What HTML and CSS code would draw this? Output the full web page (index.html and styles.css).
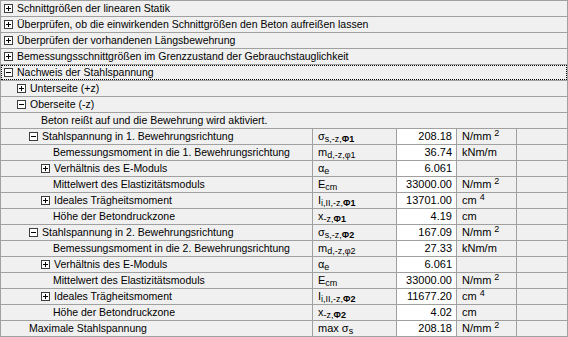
FILE: index.html
```html
<!DOCTYPE html>
<html lang="de">
<head>
<meta charset="utf-8">
<title>Nachweis der Stahlspannung</title>
<link rel="stylesheet" href="styles.css">
</head>
<body>
<div class="tree">
  <div class="row"><div class="name l0"><span class="tg plus"></span>Schnittgrößen der linearen Statik</div></div>
  <div class="row"><div class="name l0"><span class="tg plus"></span>Überprüfen, ob die einwirkenden Schnittgrößen den Beton aufreißen lassen</div></div>
  <div class="row"><div class="name l0"><span class="tg plus"></span>Überprüfen der vorhandenen Längsbewehrung</div></div>
  <div class="row"><div class="name l0"><span class="tg plus"></span>Bemessungsschnittgrößen im Grenzzustand der Gebrauchstauglichkeit</div></div>
  <div class="row"><div class="name l0 focus"><span class="tg minus"></span>Nachweis der Stahlspannung</div></div>
  <div class="row"><div class="name l1"><span class="tg plus"></span>Unterseite (+z)</div></div>
  <div class="row"><div class="name l1"><span class="tg minus"></span>Oberseite (-z)</div></div>
  <div class="row"><div class="name t2">Beton reißt auf und die Bewehrung wird aktiviert.</div></div>

  <div class="row cols">
    <div class="name l2"><span class="tg minus"></span>Stahlspannung in 1. Bewehrungsrichtung</div>
    <div class="sym">σ<span class="sub">s,-z,</span><span class="sub phi">Φ1</span></div>
    <div class="val">208.18</div>
    <div class="unit">N/mm<span class="sup">2</span></div>
    <div class="extra"></div>
  </div>
  <div class="row cols">
    <div class="name t3">Bemessungsmoment in die 1. Bewehrungsrichtung</div>
    <div class="sym">m<span class="sub">d,-z,φ1</span></div>
    <div class="val">36.74</div>
    <div class="unit">kNm/m</div>
    <div class="extra"></div>
  </div>
  <div class="row cols">
    <div class="name l3"><span class="tg plus"></span>Verhältnis des E-Moduls</div>
    <div class="sym">α<span class="sub">e</span></div>
    <div class="val">6.061</div>
    <div class="unit"></div>
    <div class="extra"></div>
  </div>
  <div class="row cols">
    <div class="name t3">Mittelwert des Elastizitätsmoduls</div>
    <div class="sym">E<span class="sub">cm</span></div>
    <div class="val">33000.00</div>
    <div class="unit">N/mm<span class="sup">2</span></div>
    <div class="extra"></div>
  </div>
  <div class="row cols">
    <div class="name l3"><span class="tg plus"></span>Ideales Trägheitsmoment</div>
    <div class="sym">I<span class="sub">i,II,-z,</span><span class="sub phi">Φ1</span></div>
    <div class="val">13701.00</div>
    <div class="unit">cm<span class="sup">4</span></div>
    <div class="extra"></div>
  </div>
  <div class="row cols">
    <div class="name t3">Höhe der Betondruckzone</div>
    <div class="sym">x<span class="sub">-z,</span><span class="sub phi">Φ1</span></div>
    <div class="val">4.19</div>
    <div class="unit">cm</div>
    <div class="extra"></div>
  </div>

  <div class="row cols">
    <div class="name l2"><span class="tg minus"></span>Stahlspannung in 2. Bewehrungsrichtung</div>
    <div class="sym">σ<span class="sub">s,-z,</span><span class="sub phi">Φ2</span></div>
    <div class="val">167.09</div>
    <div class="unit">N/mm<span class="sup">2</span></div>
    <div class="extra"></div>
  </div>
  <div class="row cols">
    <div class="name t3">Bemessungsmoment in die 2. Bewehrungsrichtung</div>
    <div class="sym">m<span class="sub">d,-z,φ2</span></div>
    <div class="val">27.33</div>
    <div class="unit">kNm/m</div>
    <div class="extra"></div>
  </div>
  <div class="row cols">
    <div class="name l3"><span class="tg plus"></span>Verhältnis des E-Moduls</div>
    <div class="sym">α<span class="sub">e</span></div>
    <div class="val">6.061</div>
    <div class="unit"></div>
    <div class="extra"></div>
  </div>
  <div class="row cols">
    <div class="name t3">Mittelwert des Elastizitätsmoduls</div>
    <div class="sym">E<span class="sub">cm</span></div>
    <div class="val">33000.00</div>
    <div class="unit">N/mm<span class="sup">2</span></div>
    <div class="extra"></div>
  </div>
  <div class="row cols">
    <div class="name l3"><span class="tg plus"></span>Ideales Trägheitsmoment</div>
    <div class="sym">I<span class="sub">i,II,-z,</span><span class="sub phi">Φ2</span></div>
    <div class="val">11677.20</div>
    <div class="unit">cm<span class="sup">4</span></div>
    <div class="extra"></div>
  </div>
  <div class="row cols">
    <div class="name t3">Höhe der Betondruckzone</div>
    <div class="sym">x<span class="sub">-z,</span><span class="sub phi">Φ2</span></div>
    <div class="val">4.02</div>
    <div class="unit">cm</div>
    <div class="extra"></div>
  </div>
  <div class="row cols">
    <div class="name t1">Maximale Stahlspannung</div>
    <div class="sym">max σ<span class="sub">s</span></div>
    <div class="val">208.18</div>
    <div class="unit">N/mm<span class="sup">2</span></div>
    <div class="extra"></div>
  </div>
</div>
</body>
</html>
```

FILE: styles.css
```css
html, body {
  margin: 0;
  padding: 0;
  background: #f0f0f0;
}

.tree {
  width: 568px;
  box-sizing: border-box;
  border-top: 1px solid #a0a0a0;
  border-left: 1px solid #a0a0a0;
  border-right: 1px solid #a0a0a0;
  background: #f0f0f0;
  font-family: "Liberation Sans", Arial, sans-serif;
  font-size: 10.5px;
  line-height: 15px;
  color: #000;
}

.row {
  display: flex;
  height: 16px;
  box-sizing: border-box;
  border-bottom: 1px solid #a0a0a0;
}

.row > .name {
  flex: 1;
}

.row.cols {
  display: grid;
  grid-template-columns: 312px 84px 60px 60px 1fr;
}

.cols > div {
  box-sizing: border-box;
  height: 15px;
  border-right: 1px solid #a0a0a0;
  white-space: nowrap;
  overflow: hidden;
}

.cols > .extra {
  border-right: none;
}

.name {
  display: flex;
  align-items: center;
  height: 15px;
  white-space: nowrap;
  overflow: hidden;
}

.l0 { padding-left: 3px; }
.l1 { padding-left: 16px; }
.l2 { padding-left: 28px; }
.l3 { padding-left: 40px; }
.t1 { padding-left: 28px; }
.t2 { padding-left: 40px; }
.t3 { padding-left: 52px; }

.focus {
  outline: 1px dotted #000;
  outline-offset: -1px;
}

.tg {
  position: relative;
  flex: none;
  width: 9px;
  height: 9px;
  box-sizing: border-box;
  border: 1px solid #3c3c3c;
  background: #fff;
  margin-right: 4px;
}

.tg::before {
  content: "";
  position: absolute;
  left: 1px;
  top: 3px;
  width: 5px;
  height: 1px;
  background: #000;
}

.plus::after {
  content: "";
  position: absolute;
  left: 3px;
  top: 1px;
  width: 1px;
  height: 5px;
  background: #000;
}

.sym {
  padding-left: 5px;
  font-size: 11px;
}

.sub {
  font-size: 9px;
  vertical-align: -2px;
  line-height: 0;
}

.phi {
  font-weight: bold;
}

.val {
  background: #fff;
  text-align: right;
  padding-right: 4px;
  font-size: 11px;
}

.unit {
  padding-left: 5px;
  font-size: 11px;
}

.sup {
  font-size: 9px;
  vertical-align: 4px;
  line-height: 0;
  margin-left: 3px;
}
```
